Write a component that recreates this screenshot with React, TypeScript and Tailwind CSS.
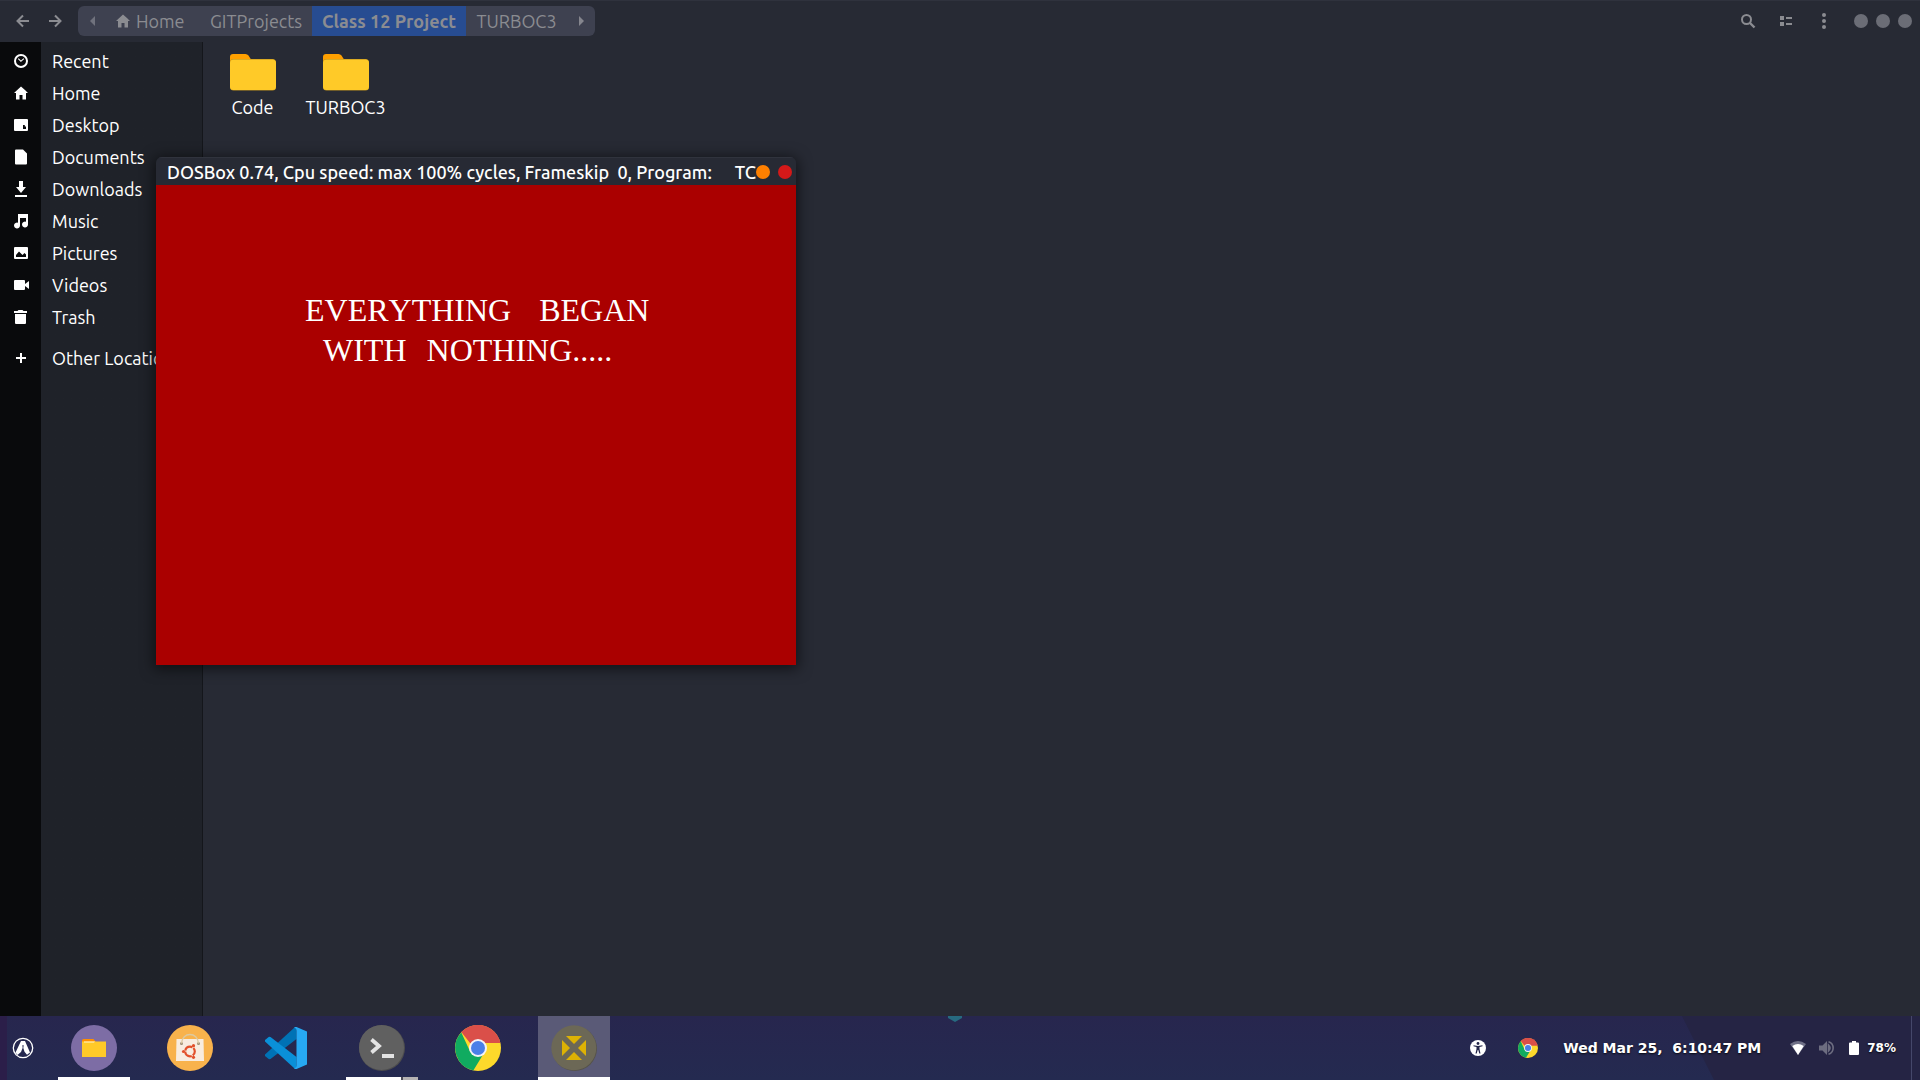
import React from "react";

type IconProps = { className?: string };

const sans = "font-['Ubuntu','Noto_Sans',sans-serif]";

function Glyph({ d, className = "size-4" }: { d: string; className?: string }) {
  return (
    <svg viewBox="0 0 16 16" className={className} fill="currentColor" aria-hidden="true">
      <path fillRule="evenodd" d={d} />
    </svg>
  );
}

const glyphs = {
  recent:
    "M8 1a7 7 0 1 0 0 14A7 7 0 0 0 8 1zm0 2a5 5 0 1 1 0 10A5 5 0 0 1 8 3zM5.6 5.2L4.9 6l3 2.9L11.2 6l-.7-.8L8 7.4z",
  home: "M8 1.5L1 8h2v6.500h3.500V10h3v4.500H13V8h2L12.500 5.600z",
  desktop: "M2 2h12a1 1 0 0 1 1 1v10a1 1 0 0 1-1 1H2a1 1 0 0 1-1-1V3a1 1 0 0 1 1-1zm8 6v4h3V9.500h-1.200V8z",
  document: "M3 0.500h7L14 4.500V14.500a1 1 0 0 1-1 1H3a1 1 0 0 1-1-1V1.500a1 1 0 0 1 1-1z",
  download: "M6 0h4v6h3l-5 6-5-6h3zM2 14h12v2H2z",
  music: "M5 1h10v10.500a3 3 0 1 1-2-2.800V5H7v7.500a3 3 0 1 1-2-2.800z",
  picture:
    "M2 2h12a1 1 0 0 1 1 1v10a1 1 0 0 1-1 1H2a1 1 0 0 1-1-1V3a1 1 0 0 1 1-1zm1 10h10V9.500L11.500 8l-2 2L6 6.500 3 10z",
  video: "M2 3h9a1 1 0 0 1 1 1v3l4-3v8l-4-3v3a1 1 0 0 1-1 1H2a1 1 0 0 1-1-1V4a1 1 0 0 1 1-1z",
  trash: "M5.500 1h4l1 1H14v2H1V2h3.500zM2 5h11v9a1 1 0 0 1-1 1H3a1 1 0 0 1-1-1z",
  plus: "M7 3h2v4h4v2H9v4H7V9H3V7h4z",
};

const places: { label: string; d: string }[] = [
  { label: "Recent", d: glyphs.recent },
  { label: "Home", d: glyphs.home },
  { label: "Desktop", d: glyphs.desktop },
  { label: "Documents", d: glyphs.document },
  { label: "Downloads", d: glyphs.download },
  { label: "Music", d: glyphs.music },
  { label: "Pictures", d: glyphs.picture },
  { label: "Videos", d: glyphs.video },
  { label: "Trash", d: glyphs.trash },
];

function Arrow({ className = "" }: IconProps) {
  return (
    <svg viewBox="0 0 14 14" className={`size-3.5 ${className}`} fill="none" stroke="currentColor" strokeWidth="2" aria-hidden="true">
      <path d="M13 7H2.500M7 1.500L1.500 7L7 12.500" />
    </svg>
  );
}

function Header() {
  return (
    <header className="flex h-[42px] shrink-0 items-center border-t border-[#2f323d] bg-[#272a34] pb-0.5 text-[#8b8c91]">
      <nav className="flex items-center" aria-label="Navigation">
        <button aria-label="Back" className="ml-[7px] flex size-8 items-center justify-center">
          <Arrow />
        </button>
        <button aria-label="Forward" className="flex size-8 items-center justify-center">
          <Arrow className="rotate-180" />
        </button>
      </nav>
      <nav className="ml-[7px] flex h-[30px] items-stretch overflow-hidden rounded-md bg-[#3e4150] text-lg leading-7" aria-label="Path">
        <button aria-label="Scroll left" className="flex w-7 items-center justify-center text-[#70727d]">
          <svg viewBox="0 0 6 12" className="h-2.5 w-[5px]" fill="currentColor"><path d="M6 0v12L0 6z" /></svg>
        </button>
        <button className="flex w-[94px] items-center gap-[5px] pl-[9px]">
          <Glyph d={glyphs.home} />
          Home
        </button>
        <button className="w-28 whitespace-nowrap">GITProjects</button>
        <button className="w-[154px] whitespace-nowrap bg-[#274c91] font-bold">Class 12 Project</button>
        <button className="w-[101px]">TURBOC3</button>
        <button aria-label="Scroll right" className="flex w-7 items-center justify-center text-[#85868e]">
          <svg viewBox="0 0 6 12" className="h-2.5 w-[5px]" fill="currentColor"><path d="M0 0v12l6-6z" /></svg>
        </button>
      </nav>
      <div className="ml-auto flex items-center gap-[22px] pr-2">
        <button aria-label="Search">
          <svg viewBox="0 0 16 16" className="size-4" fill="none" stroke="currentColor" strokeWidth="2">
            <circle cx="6.500" cy="6.500" r="4.500" />
            <path d="M10 10l4.500 4.500" strokeWidth="2.400" />
          </svg>
        </button>
        <button aria-label="View options">
          <svg viewBox="0 0 16 16" className="size-4" fill="currentColor">
            <path d="M2 3h4v4H2zM8 4h6v2H8zM2 9h4v4H2zM8 10h6v2H8z" />
          </svg>
        </button>
        <button aria-label="Menu">
          <svg viewBox="0 0 16 16" className="size-4" fill="currentColor">
            <circle cx="8" cy="2" r="2" /><circle cx="8" cy="8" r="2" /><circle cx="8" cy="14" r="2" />
          </svg>
        </button>
        <div className="flex gap-2">
          <button aria-label="Minimize" className="size-3.5 rounded-full bg-[#6b6d76]" />
          <button aria-label="Maximize" className="size-3.5 rounded-full bg-[#6b6d76]" />
          <button aria-label="Close" className="size-3.5 rounded-full bg-[#6b6d76]" />
        </div>
      </div>
    </header>
  );
}

function Place({ label, d }: { label: string; d: string }) {
  return (
    <a href="#" className="flex h-8 items-center">
      <span className="flex w-[41px] shrink-0 justify-center"><Glyph d={d} /></span>
      <span className="whitespace-nowrap pl-[11px]">{label}</span>
    </a>
  );
}

function Sidebar() {
  return (
    <aside className="w-[203px] shrink-0 overflow-hidden border-r border-[#14161b] bg-linear-to-r from-[#090a0c] from-[41px] to-[#1f2229] to-[41px] pt-[3px] text-lg text-white">
      {places.map((p) => <Place key={p.label} {...p} />)}
      <div className="mt-[9px]"><Place label="Other Locations" d={glyphs.plus} /></div>
    </aside>
  );
}

function Folder({ name }: { name: string }) {
  return (
    <button className="flex w-[93px] flex-col items-center text-lg leading-6 text-white">
      <svg viewBox="0 0 46 38" className="mb-1 h-[38px] w-[46px]" aria-hidden="true">
        <path d="M0 12V4a3 3 0 0 1 3-3h12.500a4 4 0 0 1 3 1.500L22 8v8H0z" fill="#ffa000" />
        <rect y="6" width="46" height="31.500" rx="3.500" fill="#b98d1c" />
        <rect y="6.500" width="46" height="30.500" rx="3.500" fill="#ffca28" />
      </svg>
      {name}
    </button>
  );
}

function DosBox() {
  return (
    <section className="absolute top-[157px] left-[156px] w-[640px] overflow-hidden rounded-t-md shadow-[0_2px_14px_2px_rgba(0,0,0,0.55)]" aria-label="DOSBox">
      <div className="flex h-7 items-center border-t border-[#30333d] bg-[#272a34] pr-1 pl-[11px] text-lg leading-6 font-medium text-white">
        <span className="whitespace-pre">DOSBox 0.74, Cpu speed: max 100% cycles, Frameskip  0, Program:</span>
        <span className="ml-auto">TC</span>
        <button aria-label="Minimize" className="size-3.5 rounded-full bg-[#ff8000]" />
        <button aria-label="Close" className="ml-2 size-3.5 rounded-full bg-[#d41919]" />
      </div>
      <div className="h-[480px] bg-[#aa0000] pt-[105px] pl-[149px] font-['Liberation_Serif',serif] text-[32px] leading-10 text-white [font-kerning:none]">
        <p className="flex gap-7"><span>EVERYTHING</span><span>BEGAN</span></p>
        <p className="flex gap-5 pl-[18px]"><span>WITH</span><span>NOTHING.....</span></p>
      </div>
    </section>
  );
}

function Chrome({ className }: IconProps) {
  return (
    <svg viewBox="0 0 46 46" className={className} aria-hidden="true">
      <circle cx="23" cy="23" r="23" fill="#fdd92b" />
      <path d="M15 18H45.400A23 23 0 0 0 6.300 7z" fill="#da4f49" />
      <path d="M6.300 7.500A23 23 0 0 0 18.300 45.500L27.500 30.500L15.300 27z" fill="#10ab60" />
      <circle cx="23" cy="23" r="9" fill="#f3f3f7" />
      <circle cx="23" cy="23" r="7" fill="#4a80e8" />
    </svg>
  );
}

function FilesIcon() {
  return (
    <svg viewBox="0 0 46 46" className="size-[46px]" aria-hidden="true">
      <circle cx="23" cy="23" r="23" fill="#7d6da5" />
      <path d="M11 20V15.500a1.500 1.500 0 0 1 1.500-1.500H22.500l2 2.500V20z" fill="#ff8f00" />
      <path d="M11 16.500h24V32H11z" fill="#ffca28" />
      <path d="M13 17.500h10l1-1h-11z" fill="#fff3d0" />
    </svg>
  );
}

function SoftwareIcon() {
  return (
    <svg viewBox="0 0 46 46" className="size-[46px]" aria-hidden="true">
      <circle cx="23" cy="23" r="23" fill="#f8b24c" />
      <path d="M9.500 14h27l.5 22H9z" fill="#f8ece0" />
      <circle cx="14.500" cy="18.500" r="1.500" fill="#9a8d75" />
      <circle cx="31.500" cy="18.500" r="1.500" fill="#9a8d75" />
      <path d="M14.500 18.500C15 6.500 31 6.500 31.500 18.500" fill="none" stroke="#dcc9a0" strokeWidth="1.400" />
      <circle cx="23" cy="26.500" r="4.800" fill="none" stroke="#e2502b" strokeWidth="2.200" strokeDasharray="9 1.050" strokeDashoffset="4.500" />
      <circle cx="16.500" cy="26.500" r="1.600" fill="#e2502b" />
      <circle cx="26.500" cy="20.700" r="1.600" fill="#e2502b" />
      <circle cx="26.500" cy="32.300" r="1.600" fill="#e2502b" />
    </svg>
  );
}

function CodeIcon() {
  return (
    <svg viewBox="0 0 42 42" className="size-[42px]" aria-hidden="true">
      <path d="M0 27.500V29L4 32.200L5.500 32L31.500 12V0L29.500 .5z" fill="#0072b5" />
      <path d="M0 14.500V13L4 9.800L5.500 10L31.500 30V42L29 41z" fill="#0a90d8" />
      <path d="M31.500 0L42 4.500V37.500L31.500 42Q30 42.500 29 41Q31.500 41.500 31.500 38V4Q31.500 .5 29 1Q30-.5 31.500 0z" fill="#27a9f3" />
    </svg>
  );
}

function TerminalIcon() {
  return (
    <svg viewBox="0 0 46 46" className="size-[46px]" aria-hidden="true">
      <circle cx="23" cy="23" r="23" fill="#4d4d4d" />
      <circle cx="22.500" cy="22.500" r="22.500" fill="#606060" />
      <path d="M12.500 14.500L20 21L12.500 27.500" fill="none" stroke="#e3e3e3" strokeWidth="3.800" />
      <path d="M23 29h12v4H23z" fill="#e3e3e3" />
    </svg>
  );
}

function DosBoxIcon() {
  return (
    <svg viewBox="0 0 46 46" className="size-[46px]" aria-hidden="true">
      <circle cx="23.500" cy="23.500" r="22.500" fill="#565349" />
      <circle cx="22.800" cy="22.800" r="22.500" fill="#6c6856" />
      <path d="M15 11h16l-8 8zM15 35h16l-8-8zM11 15v16l8-8zM35 15v16l-8-8z" fill="#ddb204" />
    </svg>
  );
}

const apps = [
  { name: "Files", Icon: FilesIcon, active: false, windows: 1 },
  { name: "Software", Icon: SoftwareIcon, active: false, windows: 0 },
  { name: "Visual Studio Code", Icon: CodeIcon, active: false, windows: 0 },
  { name: "Terminal", Icon: TerminalIcon, active: false, windows: 2 },
  { name: "Chrome", Icon: () => <Chrome className="size-[46px]" />, active: false, windows: 0 },
  { name: "DOSBox", Icon: DosBoxIcon, active: true, windows: 1 },
];

function Taskbar() {
  return (
    <footer className="relative flex h-16 shrink-0 items-center overflow-hidden bg-linear-to-b from-[#27264e] to-[#242a50] text-white">
      <svg className="absolute inset-0 h-full w-full" aria-hidden="true">
        <rect width="7" height="64" fill="#2b1e49" />
        <path d="M948 0h14v2l-7 4-7-4z" fill="#276a80" />
        <svg x="100%" width="240" height="64" overflow="visible">
          <path d="M-238 0H0V64H-206z" fill="#252444" />
          <path d="M-9 0h1v64h-1z" fill="#45476a" />
        </svg>
      </svg>
      <button aria-label="Applications" className="relative ml-3 flex size-[22px] items-center justify-center">
        <svg viewBox="0 0 22 22" className="size-[22px]">
          <circle cx="11" cy="11" r="9.700" fill="none" stroke="#fff" strokeWidth="1.300" />
          <path d="M9 4h4l5 11.500-3 2.200-2.500-3L11 10l-2 5-3.500 3L3.500 15.500z" fill="#fff" />
          <path d="M10.500 8h1v2.500h-1z" fill="#26264e" />
        </svg>
      </button>
      <nav className="relative ml-6 flex gap-6 self-stretch" aria-label="Applications">
        {apps.map(({ name, Icon, active, windows }) => (
          <button key={name} aria-label={name} className={`relative flex w-[72px] items-center justify-center ${active ? "bg-[#5a5a77]" : ""}`}>
            <Icon />
            {windows > 0 && (
              <span className="absolute inset-x-0 bottom-0 flex h-[3px]">
                <span className="flex-1 bg-white" />
                {windows > 1 && <span className="w-[17px] border-l-2 border-[#4b4b55] bg-[#b5b3b3]" />}
              </span>
            )}
          </button>
        ))}
      </nav>
      <div className="relative ml-auto flex items-center pr-6 font-['DejaVu_Sans',sans-serif] font-bold whitespace-pre [text-shadow:0_1px_2px_rgba(0,0,0,0.8)]">
        <button aria-label="Accessibility" className="mr-8">
          <svg viewBox="0 0 16 16" className="size-4">
            <circle cx="8" cy="8" r="8" fill="#fff" />
            <circle cx="8" cy="3.500" r="1.400" fill="#222448" />
            <path d="M3.500 5.200L8 6l4.500-.8v1.100L9.500 7v2l1 4.500h-1.200L8.300 10h-.6l-1 3.500H5.500l1-4.500V7l-3-.7z" fill="#222448" />
          </svg>
        </button>
        <button aria-label="Chrome" className="mr-[25px]"><Chrome className="size-5" /></button>
        <time className="text-sm">Wed Mar 25,  6:10:47 PM</time>
        <svg viewBox="0 0 16 16" className="ml-[29px] size-4" aria-label="Wi-Fi">
          <path d="M0 4Q8-2 16 4L8 15z" fill="#6f7087" />
          <path d="M2.300 6Q8 2 13.700 6L8 15z" fill="#fff" />
        </svg>
        <svg viewBox="0 0 16 16" className="ml-3 size-4" aria-label="Volume">
          <path d="M1 5.500h3.500L9 1v14l-4.500-4.500H1z" fill="#6d6d80" />
          <path d="M10.500 5v6q3-3 0-6zM10.500 1.700A6.600 6.600 0 0 1 10.500 14.300" fill="none" stroke="#6d6d80" strokeWidth="1.600" />
        </svg>
        <svg viewBox="0 0 10 14" className="ml-[15px] h-3.5 w-2.5" aria-label="Battery">
          <path d="M3 0h4v1.500h2a1 1 0 0 1 1 1V13a1 1 0 0 1-1 1H1a1 1 0 0 1-1-1V2.500a1 1 0 0 1 1-1h2z" fill="#fff" />
        </svg>
        <span className="ml-2 text-xs">78%</span>
      </div>
    </footer>
  );
}

export default function App() {
  return (
    <div className={`relative flex min-h-screen flex-col overflow-hidden bg-[#272a34] ${sans}`}>
      <Header />
      <div className="flex flex-1">
        <Sidebar />
        <main className="flex flex-1 items-start pt-[11px] pl-[3px]">
          <Folder name="Code" />
          <Folder name="TURBOC3" />
        </main>
      </div>
      <Taskbar />
      <DosBox />
    </div>
  );
}
